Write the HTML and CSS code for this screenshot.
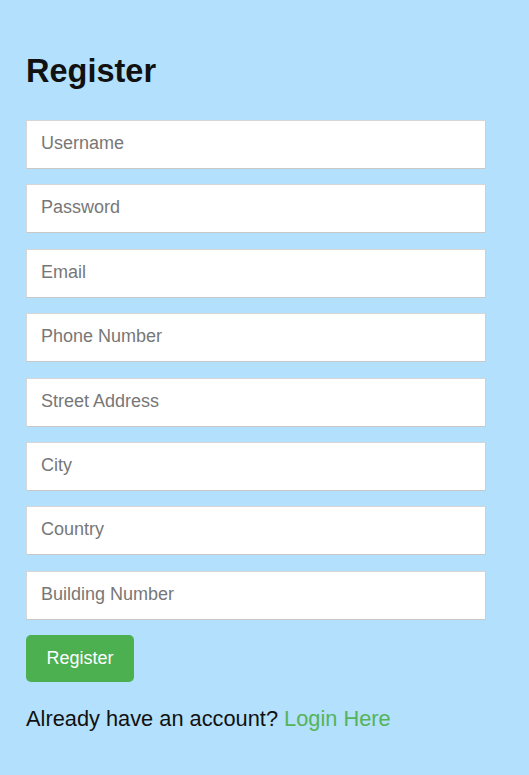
FILE: index.html
```html
<!DOCTYPE html>
<html lang="en">
<head>
<meta charset="utf-8">
<title>Register</title>
<link rel="stylesheet" href="styles.css">
</head>
<body>
<div class="card">
  <h2 class="title">Register</h2>
  <form class="form">
    <input class="field" type="text" placeholder="Username">
    <input class="field" type="password" placeholder="Password">
    <input class="field" type="email" placeholder="Email">
    <input class="field" type="text" placeholder="Phone Number">
    <input class="field" type="text" placeholder="Street Address">
    <input class="field" type="text" placeholder="City">
    <input class="field" type="text" placeholder="Country">
    <input class="field" type="text" placeholder="Building Number">
    <div class="actions"><button class="btn" type="button">Register</button></div>
  </form>
  <p class="login">Already have an account? <a class="login-link" href="#">Login Here</a></p>
</div>
</body>
</html>
```

FILE: styles.css
```css
html, body {
  margin: 0;
  padding: 0;
  height: 100%;
  background: #b3e0fc;
}
body {
  font-family: "Liberation Sans", Arial, sans-serif;
}
.card {
  box-sizing: border-box;
  min-height: 100%;
  padding: 53px 43px 0 26px;
  background: #b3e0fc;
}
.title {
  margin: 0;
  font-size: 32.5px;
  line-height: 36px;
  font-weight: 700;
  color: #111;
}
.form {
  margin-top: 31px;
  display: flex;
  flex-direction: column;
  gap: 15.4px;
}
.field {
  box-sizing: border-box;
  width: 460px;
  height: 49px;
  margin: 0;
  padding: 0 14px 2px;
  border: 1px solid #d6d6d6;
  border-bottom-color: #c8c8c8;
  border-right-color: #cfcfcf;
  background: #fff;
  font-family: "Liberation Sans", Arial, sans-serif;
  font-size: 18px;
  color: #333;
  outline: none;
}
.field::placeholder {
  color: #777;
  opacity: 1;
}
.actions {
  display: flex;
}
.btn {
  box-sizing: border-box;
  width: 108px;
  height: 47px;
  margin: 0;
  padding: 0;
  border: none;
  border-radius: 5px;
  background: #4caf50;
  color: #fff;
  font-family: "Liberation Sans", Arial, sans-serif;
  font-size: 18px;
  cursor: pointer;
}
.login {
  margin: 23.4px 0 0;
  font-size: 21.8px;
  line-height: 26px;
  color: #111;
}
.login-link {
  color: #55b359;
  text-decoration: none;
}
```
